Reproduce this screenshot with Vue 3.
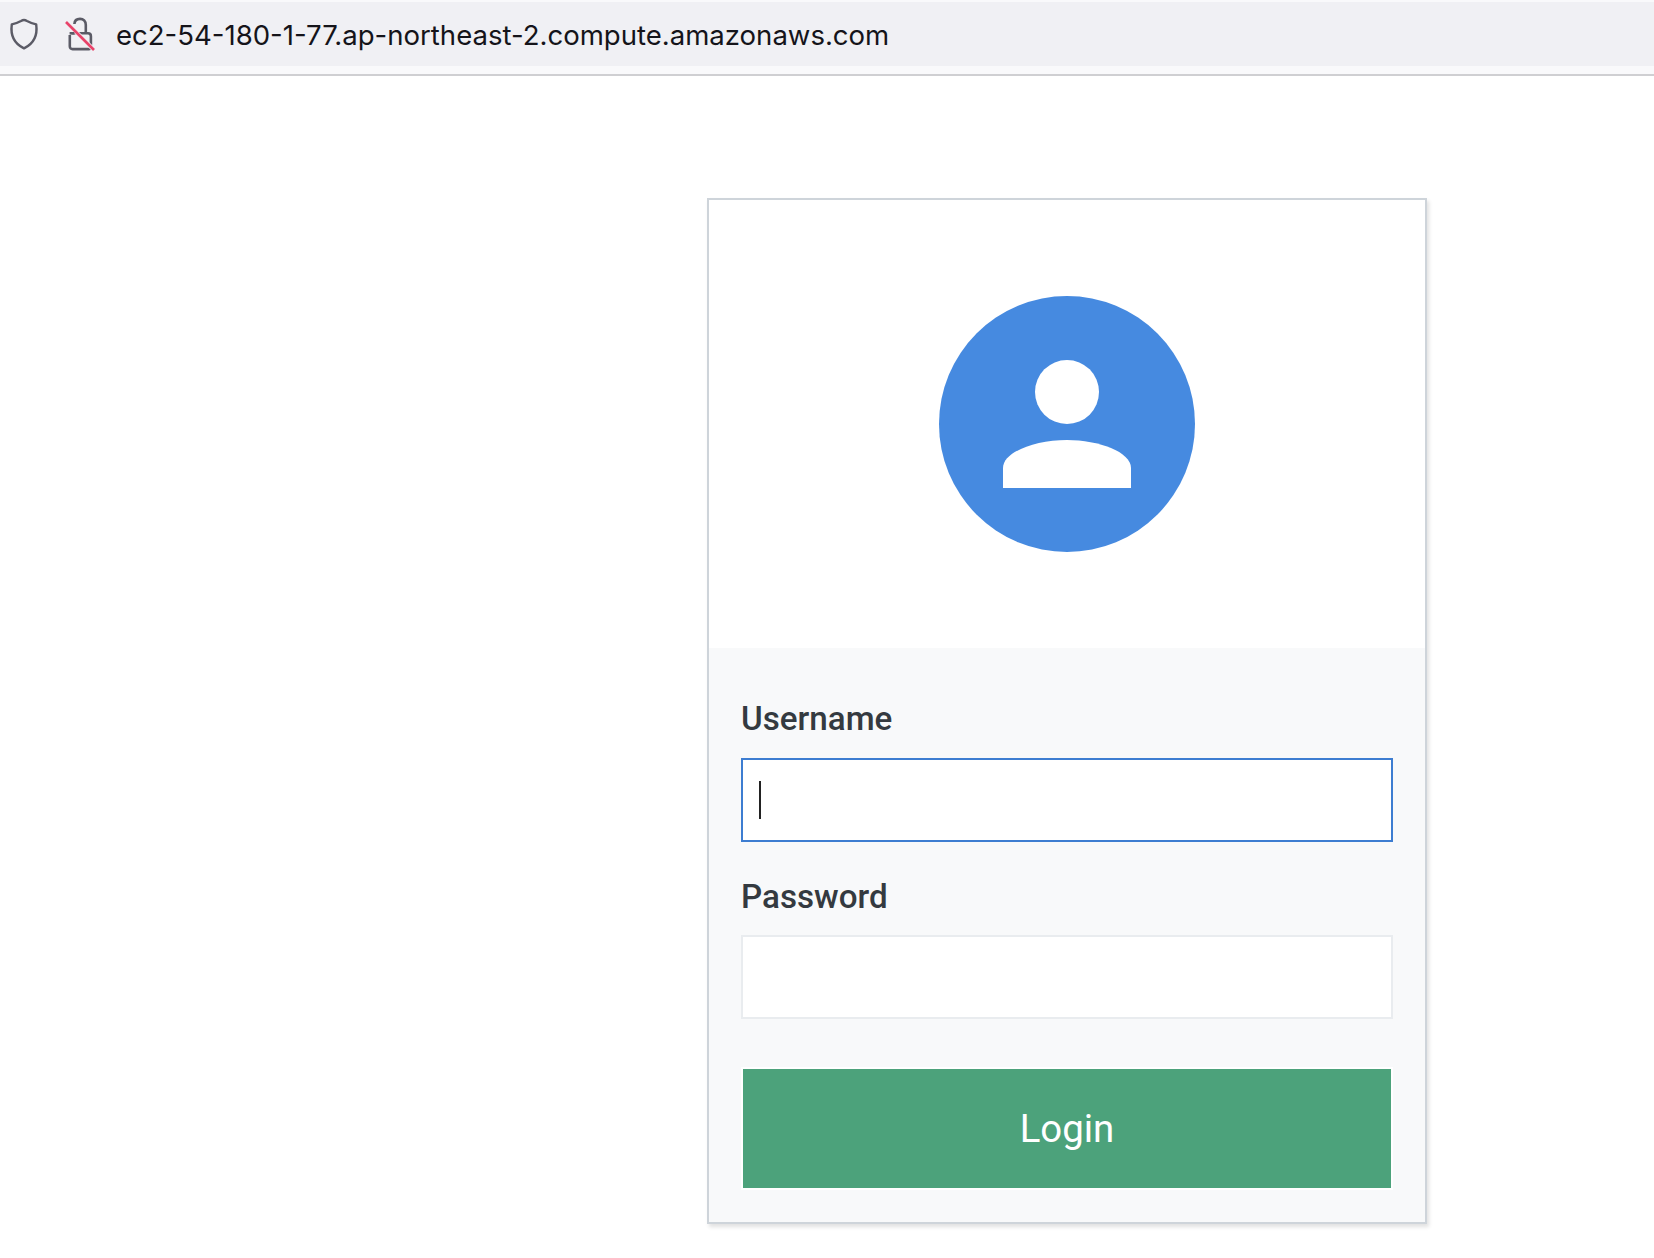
<template>
  <div class="page">
    <!-- browser address bar -->
    <header class="urlbar">
      <div class="urlbar-inner">
        <svg class="shield" width="32" height="32" viewBox="0 0 32 32" fill="none">
          <path d="M16 2 C17 2 18 2.4 19 3 C22 4.6 25 5.8 28.2 6.4 C29.4 15 28 24.6 16 30.4 C4 24.6 2.6 15 3.8 6.4 C7 5.8 10 4.6 13 3 C14 2.4 15 2 16 2 Z" stroke="#5b5b66" stroke-width="2.4" stroke-linejoin="round" />
        </svg>
        <svg class="lock" width="32" height="36" viewBox="0 0 32 36" fill="none">
          <path d="M10.4 8 C10.6 4.6 13 2.9 16 2.9 C19.4 2.9 21.8 5.2 21.8 9 V17.4" stroke="#5b5b66" stroke-width="2.6" />
          <path d="M7.6 17.3 H24 C25.8 17.3 26.9 18.4 26.9 20.2 V30.8 C26.9 32.2 26 33.1 24.6 33.1 H8.6 C6.9 33.1 5.8 32 5.8 30.3 V19" stroke="#5b5b66" stroke-width="2.6" />
          <path d="M2 6 L30 34" stroke="#f0f0f4" stroke-width="4.4" />
          <path d="M5.6 17.3 L10.4 17.3" stroke="#5b5b66" stroke-width="2.6" />
          <path d="M2 6 L30 34" stroke="#e8436a" stroke-width="2.6" />
        </svg>
        <span class="address">ec2-54-180-1-77.ap-northeast-2.compute.amazonaws.com</span>
      </div>
    </header>

    <div class="card">
      <div class="card-top">
        <svg class="avatar" width="256" height="256" viewBox="0 0 256 256">
          <circle cx="128" cy="128" r="128" fill="#468ae0" />
          <circle cx="128" cy="96" r="32" fill="#fff" />
          <path d="M64 192 V172 C64 156 96 144 128 144 C160 144 192 156 192 172 V192 Z" fill="#fff" />
        </svg>
      </div>

      <form class="card-form" @submit.prevent>
        <label class="field-label">Username</label>
        <div class="input focused"><span class="caret"></span></div>

        <label class="field-label second">Password</label>
        <div class="input"></div>

        <button class="login" type="button">Login</button>
      </form>
    </div>
  </div>
</template>

<script setup>
</script>

<style>
html, body {
  background: #fff;
}
</style>

<style scoped>
.page {
  width: 1654px;
  height: 1258px;
  overflow: hidden;
  background: #fff;
  font-family: Roboto, "Liberation Sans", sans-serif;
}

.urlbar {
  height: 76px;
  box-sizing: border-box;
  padding-top: 2px;
  border-bottom: 2px solid #cfcfd2;
  background: #f9f9fb;
}

.urlbar-inner {
  height: 64px;
  display: flex;
  align-items: center;
  background: #f0f0f4;
}

.shield {
  margin-left: 8px;
  flex: none;
}

.lock {
  margin-left: 24px;
  flex: none;
}

.address {
  margin-left: 20px;
  padding-top: 1px;
  font-family: Inter, "Liberation Sans", sans-serif;
  font-size: 27.55px;
  color: #15141a;
  white-space: nowrap;
}

.card {
  width: 720px;
  height: 1026px;
  box-sizing: border-box;
  margin: 122px 0 0 707px;
  border: 2px solid #ced4da;
  box-shadow: 2px 3px 4px rgba(0, 0, 0, .12);
  background: #fff;
}

.card-top {
  height: 448px;
  display: flex;
  justify-content: center;
  align-items: center;
}

.avatar {
  display: block;
}

.card-form {
  height: 574px;
  box-sizing: border-box;
  padding: 48px 32px 0;
  background: #f8f9fa;
}

.field-label {
  display: block;
  height: 48px;
  margin-bottom: 14px;
  font-size: 33.2px;
  font-weight: 500;
  line-height: 46px;
  color: #343a40;
}

.field-label.second {
  margin-top: 32px;
  margin-bottom: 13px;
}

.input {
  height: 84px;
  box-sizing: border-box;
  display: flex;
  align-items: center;
  padding-left: 16px;
  border: 2px solid #e9ecef;
  background: #fff;
}

.input.focused {
  border-color: #3d7dd1;
}

.caret {
  width: 2px;
  height: 38px;
  background: #222;
}

.login {
  display: block;
  width: 652px;
  height: 123px;
  box-sizing: border-box;
  margin-top: 48px;
  border: 2px solid #fff;
  background: #4ca27b;
  color: #fff;
  font-family: inherit;
  font-size: 38.4px;
  font-weight: 400;
  padding: 0;
}
</style>
